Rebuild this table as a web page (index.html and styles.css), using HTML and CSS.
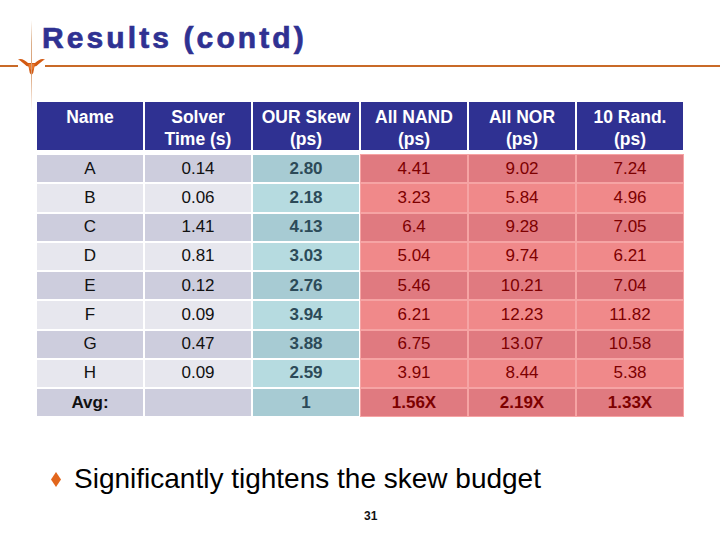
FILE: index.html
```html
<!DOCTYPE html>
<html>
<head>
<meta charset="utf-8">
<link rel="stylesheet" href="styles.css">
</head>
<body>
<div class="slide">
  <h1 class="title">Results (contd)</h1>
  <div class="rule">
    <span class="seg seg-left"></span>
    <svg class="logo" width="27" height="18" viewBox="0 0 27 18">
      <path d="M0,2.5 C3,0.8 7,3 10,6 L17,6 C20,3 24,0.8 27,2.5 C24.5,3.5 21.5,6.5 18.5,9 L16.5,9.5 L15.2,16 L13.5,18 L11.8,16 L10.5,9.5 L8.5,9 C5.5,6.5 2.5,3.5 0,2.5 Z" fill="#d35a12"/>
      <path d="M10.5,7 L16.5,7 L15.3,12.5 L11.7,12.5 Z" fill="#ea7a30"/>
    </svg>
    <span class="seg seg-right"></span>
  </div>
  <table class="results">
    <thead>
      <tr>
        <th>Name</th>
        <th>Solver<br>Time (s)</th>
        <th>OUR Skew<br>(ps)</th>
        <th>All NAND<br>(ps)</th>
        <th>All NOR<br>(ps)</th>
        <th>10 Rand.<br>(ps)</th>
      </tr>
    </thead>
    <tbody>
      <tr class="odd"><td>A</td><td>0.14</td><td class="ours">2.80</td><td class="red">4.41</td><td class="red">9.02</td><td class="red">7.24</td></tr>
      <tr class="even"><td>B</td><td>0.06</td><td class="ours">2.18</td><td class="red">3.23</td><td class="red">5.84</td><td class="red">4.96</td></tr>
      <tr class="odd"><td>C</td><td>1.41</td><td class="ours">4.13</td><td class="red">6.4</td><td class="red">9.28</td><td class="red">7.05</td></tr>
      <tr class="even"><td>D</td><td>0.81</td><td class="ours">3.03</td><td class="red">5.04</td><td class="red">9.74</td><td class="red">6.21</td></tr>
      <tr class="odd"><td>E</td><td>0.12</td><td class="ours">2.76</td><td class="red">5.46</td><td class="red">10.21</td><td class="red">7.04</td></tr>
      <tr class="even"><td>F</td><td>0.09</td><td class="ours">3.94</td><td class="red">6.21</td><td class="red">12.23</td><td class="red">11.82</td></tr>
      <tr class="odd"><td>G</td><td>0.47</td><td class="ours">3.88</td><td class="red">6.75</td><td class="red">13.07</td><td class="red">10.58</td></tr>
      <tr class="even"><td>H</td><td>0.09</td><td class="ours">2.59</td><td class="red">3.91</td><td class="red">8.44</td><td class="red">5.38</td></tr>
      <tr class="odd avg"><td>Avg:</td><td></td><td class="ours">1</td><td class="red">1.56X</td><td class="red">2.19X</td><td class="red">1.33X</td></tr>
    </tbody>
  </table>
  <ul class="bullets">
    <li>
      <svg class="diamond" width="10" height="15" viewBox="0 0 10 15"><polygon points="5,0 10,7.5 5,15 0,7.5" fill="#e2661c"/></svg>
      <span>Significantly tightens the skew budget</span>
    </li>
  </ul>
  <div class="page-num">31</div>
</div>
</body>
</html>
```

FILE: styles.css
```css
html, body {
  margin: 0;
  padding: 0;
  background: #ffffff;
}

.slide {
  position: relative;
  width: 720px;
  height: 540px;
  overflow: hidden;
  font-family: "Liberation Sans", Arial, sans-serif;
  background: #ffffff;
}

.slide::before {
  content: "";
  position: absolute;
  left: 31px;
  top: 20px;
  width: 1px;
  height: 92px;
  background: linear-gradient(to bottom, rgba(216,160,112,0) 0%, #dcb08c 25%, #d89c70 55%, rgba(216,160,112,0) 100%);
}

.title {
  margin: 0;
  padding: 20px 0 0 42px;
  font-size: 30px;
  line-height: 36px;
  font-weight: bold;
  letter-spacing: 3.1px;
  color: #2f3192;
  -webkit-text-stroke: 0.7px #2f3192;
}

.rule {
  margin-top: 1px;
  height: 18px;
  display: flex;
  align-items: center;
}

.seg {
  height: 2px;
  background: #c96a28;
}

.seg-left {
  width: 18px;
}

.seg-right {
  flex: 1;
}

.logo {
  display: block;
  flex: none;
}

.results {
  margin: 25px 0 0 35px;
  border-collapse: separate;
  border-spacing: 2px;
  table-layout: fixed;
  width: 650px;
}

.results th,
.results td {
  width: 106px;
  padding: 0;
  text-align: center;
}

.results th {
  background: #2f3192;
  color: #ffffff;
  font-size: 17.5px;
  font-weight: bold;
  line-height: 22px;
  height: 46px;
  vertical-align: top;
  padding-top: 4px;
  box-sizing: border-box;
  border-bottom: 3px solid #ffffff;
  background-clip: padding-box;
}

.results td {
  height: 27.25px;
  font-size: 17px;
  line-height: 20px;
  color: #111111;
  vertical-align: middle;
}

.odd td {
  background: #cdcddd;
}

.even td {
  background: #e7e7ee;
}

.results td.ours {
  color: #2c4a58;
  font-weight: bold;
}

.odd td.ours {
  background: #a7cbd3;
}

.even td.ours {
  background: #b6dbe0;
}

.results td.red {
  color: #7d0000;
  outline: 1px solid #f6a4a4;
}

.odd td.red {
  background: #e07a80;
}

.even td.red {
  background: #f0898a;
}

.avg td {
  font-weight: bold;
}

.bullets {
  list-style: none;
  margin: 45px 0 0 0;
  padding: 0 0 0 51px;
}

.bullets li {
  display: flex;
  align-items: center;
  gap: 13px;
  font-size: 28px;
  line-height: 32px;
  color: #000000;
}

.diamond {
  display: block;
  flex: none;
  margin-top: 1px;
}

.page-num {
  margin-top: 14px;
  padding-left: 364px;
  font-size: 12px;
  line-height: 14px;
  font-weight: bold;
  color: #111111;
}
```
